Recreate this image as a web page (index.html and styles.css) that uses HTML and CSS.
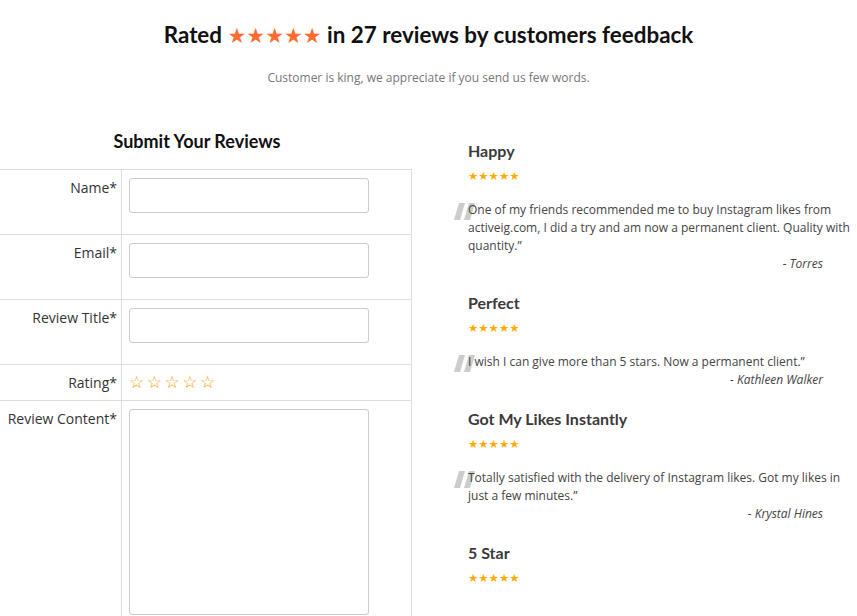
FILE: index.html
```html
<!DOCTYPE html>
<html lang="en">
<head>
    <meta charset="UTF-8">
    <meta name="viewport" content="width=device-width, initial-scale=1.0">
    <title>Customer Reviews</title>
    <link rel="stylesheet" href="styles.css">
</head>
<body>
    <header class="intro">
        <h1>Rated <span class="title-stars">★★★★★</span> in 27 reviews by customers feedback</h1>
        <p>Customer is king, we appreciate if you send us few words.</p>
    </header>

    <div class="layout">
        <!-- Review form -->
        <section class="form-col">
            <h2>Submit Your Reviews</h2>
            <form id="reviewForm">
                <table class="review-table">
                    <tr>
                        <td class="label-cell"><label for="name">Name*</label></td>
                        <td class="field-cell"><input type="text" id="name" name="name"></td>
                    </tr>
                    <tr>
                        <td class="label-cell"><label for="email">Email*</label></td>
                        <td class="field-cell"><input type="text" id="email" name="email"></td>
                    </tr>
                    <tr>
                        <td class="label-cell"><label for="title">Review Title*</label></td>
                        <td class="field-cell"><input type="text" id="title" name="title"></td>
                    </tr>
                    <tr class="rating-row">
                        <td class="label-cell">Rating*</td>
                        <td class="field-cell"><span class="rate-stars">☆☆☆☆☆</span></td>
                    </tr>
                    <tr>
                        <td class="label-cell"><label for="content">Review Content*</label></td>
                        <td class="field-cell"><textarea id="content" name="content"></textarea></td>
                    </tr>
                </table>
            </form>
        </section>

        <!-- Customer reviews -->
        <section class="reviews-col">
            <div class="review">
                <h3>Happy</h3>
                <div class="stars">★★★★★</div>
                <p class="quote">
                    <svg class="quote-mark" width="22" height="18" viewBox="0 0 22 18"><polygon points="5,0 11,0 6,17 0,17" fill="#ccc"/><polygon points="15,0 21,0 16,17 10,17" fill="#ccc"/></svg>
                    One of my friends recommended me to buy Instagram likes from activeig.com, I did a try and am now a permanent client. Quality with quantity.”
                </p>
                <p class="author">- Torres</p>
            </div>
            <div class="review">
                <h3>Perfect</h3>
                <div class="stars">★★★★★</div>
                <p class="quote">
                    <svg class="quote-mark" width="22" height="18" viewBox="0 0 22 18"><polygon points="5,0 11,0 6,17 0,17" fill="#ccc"/><polygon points="15,0 21,0 16,17 10,17" fill="#ccc"/></svg>
                    I wish I can give more than 5 stars. Now a permanent client.”
                </p>
                <p class="author">- Kathleen Walker</p>
            </div>
            <div class="review">
                <h3>Got My Likes Instantly</h3>
                <div class="stars">★★★★★</div>
                <p class="quote">
                    <svg class="quote-mark" width="22" height="18" viewBox="0 0 22 18"><polygon points="5,0 11,0 6,17 0,17" fill="#ccc"/><polygon points="15,0 21,0 16,17 10,17" fill="#ccc"/></svg>
                    Totally satisfied with the delivery of Instagram likes. Got my likes in just a few minutes.”
                </p>
                <p class="author">- Krystal Hines</p>
            </div>
            <div class="review">
                <h3>5 Star</h3>
                <div class="stars">★★★★★</div>
            </div>
        </section>
    </div>
</body>
</html>
```

FILE: styles.css
```css
body {
    margin: 0;
    padding-top: 21px;
    font-family: "Open Sans", Arial, sans-serif;
    color: #444;
    background: #fff;
    overflow: hidden;
}
.intro {
    text-align: center;
}
.intro h1 {
    margin: 0;
    font-family: Lato, "Open Sans", sans-serif;
    font-size: 22.4px;
    line-height: 28px;
    font-weight: 700;
    color: #111;
}
.title-stars {
    font-family: "DejaVu Sans", sans-serif;
    font-size: 21px;
    color: #ff6b2f;
}
.intro p {
    margin: 19px 0 0;
    font-size: 12px;
    line-height: 18px;
    color: #777;
}
.layout {
    display: grid;
    grid-template-columns: 430px 1fr;
    column-gap: 56px;
    margin-left: -18px;
    margin-top: 42px;
}
.form-col h2 {
    margin: 0 0 16px;
    text-align: center;
    font-family: Lato, "Open Sans", sans-serif;
    font-size: 18px;
    line-height: 24px;
    color: #111;
}
.review-table {
    width: 100%;
    border-collapse: collapse;
    font-size: 14px;
    line-height: 20px;
    color: #333;
}
.review-table td {
    border: 1px solid #ddd;
    padding: 8px;
    vertical-align: top;
}
.label-cell {
    width: 126px;
    text-align: right;
    padding-right: 4px !important;
}
.field-cell {
    padding-left: 7px !important;
}
.field-cell input {
    display: block;
    width: 240px;
    height: 35px;
    margin-bottom: 13px;
    border: 1px solid #ccc;
    border-radius: 3px;
    box-sizing: border-box;
}
.field-cell textarea {
    display: block;
    width: 240px;
    height: 206px;
    border: 1px solid #ccc;
    border-radius: 3px;
    box-sizing: border-box;
    resize: none;
}
.review-table .rating-row td {
    padding-bottom: 7px;
}
.rate-stars {
    display: block;
    height: 18px;
    font-family: "DejaVu Sans", sans-serif;
    font-size: 17px;
    line-height: 18px;
    letter-spacing: 2.5px;
    color: #f59c00;
    font-weight: 700;
}
.reviews-col {
    padding-top: 11px;
}
.review {
    margin-bottom: 19px;
}
.review h3 {
    margin: 0;
    font-family: Lato, "Open Sans", sans-serif;
    font-size: 16px;
    line-height: 22px;
    color: #3a3a3a;
}
.stars {
    margin-top: 7px;
    font-family: "DejaVu Sans", sans-serif;
    font-size: 11.5px;
    line-height: 14px;
    color: #fa0;
}
.quote {
    position: relative;
    z-index: 0;
    margin: 18px 0 0;
    font-size: 12px;
    line-height: 18px;
    color: #444;
}
.quote-mark {
    position: absolute;
    z-index: -1;
    left: -14px;
    top: 2px;
}
.author {
    margin: 0;
    padding-right: 34px;
    text-align: right;
    font-style: italic;
    font-size: 12px;
    line-height: 18px;
    color: #444;
}
```
